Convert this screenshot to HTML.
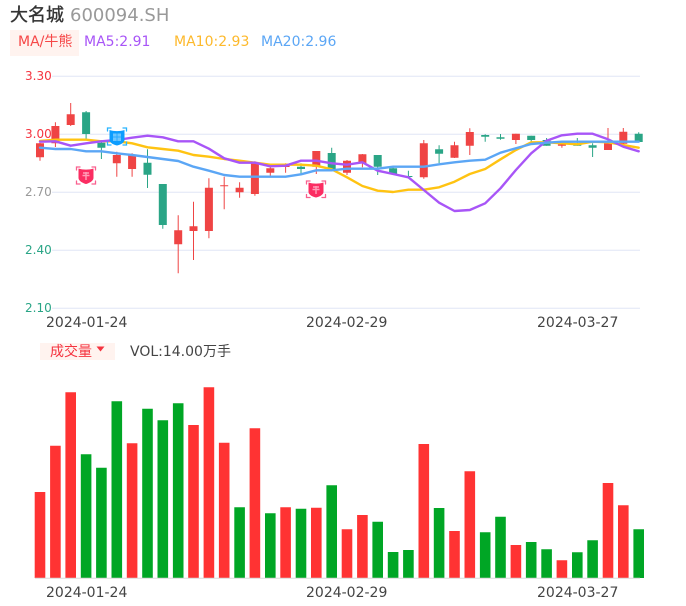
<!DOCTYPE html>
<html lang="zh">
<head>
<meta charset="utf-8">
<style>
html,body{margin:0;padding:0;background:#fff}
#p{position:relative;width:686px;height:606px;overflow:hidden;background:#fff;font-family:"DejaVu Sans","Noto Sans CJK SC",sans-serif}
#p svg{position:absolute;left:0;top:0}
.t{position:absolute;white-space:nowrap;line-height:1}
</style>
</head>
<body>
<div id="p">
<svg width="686" height="606" viewBox="0 0 686 606" fill="none">
<rect x="10" y="30" width="69" height="26" fill="#fff3ef"/>
<rect x="40" y="343" width="75" height="17" fill="#fff3ef"/>
<path d="M96.500 346.500H104.500L100.500 351.500Z" fill="#f5333f"/>
<path d="M52 76.300H640M52 134.300H640M52 192.300H640M52 250.300H640M52 308.300H640" stroke="#e0e6f5" stroke-width="1"/>
<path stroke="#ef4444" stroke-width="1" d="M40 143V160.700M55.400 122.300V147M70.700 103V126M116.800 151.700V176.700M132.100 153.300V176.700M178.200 215.300V273.300M193.500 201.700V260M208.900 178.300V238.300M224.200 176.700V209.300M239.600 182.300V197.700M254.900 161.300V195.700M270.300 166.700V175.700M285.600 163.300V172.700M316.300 151V174M347 160V175M362.400 154V167.300M423.800 140V178.700M454.500 141.700V158M469.800 128.300V155M515.900 133.700V144M561.900 144V147.700M608 128V150M623.300 128V144"/>
<path stroke="#ef4444" stroke-width="8" d="M40 143.300V157.300M55.400 126V143.300M70.700 114.300V125M116.800 155V163.300M132.100 155.300V169M178.200 230.300V244.300M193.500 226.300V231M208.900 187.700V231M224.200 185.300V186.300M239.600 187.700V192.300M254.900 163.300V194M270.300 168.300V172.700M285.600 165.700V167M316.300 151V166.700M347 160.700V172.700M362.400 154.300V163.300M423.800 143.300V177.300M454.500 145.300V157.700M469.800 132V145.700M515.900 133.700V140M561.900 144.300V145.700M608 143.300V150M623.300 131.700V143.700"/>
<path stroke="#2aa586" stroke-width="1" d="M86.100 111V139M101.400 140V159M147.500 149.300V188M162.800 184V228.700M301 163.300V174M331.700 147.700V171M377.700 155V175M393.100 166.700V175M408.400 170.700V177M439.100 145.300V163M485.200 134.300V141.700M500.500 134V139.700M531.200 135.700V144M546.600 138V145.700M577.300 138V145.700M592.600 143.300V157M638.700 132.300V142"/>
<path stroke="#2aa586" stroke-width="8" d="M86.100 112.300V134M101.400 142.700V147.700M147.500 162.700V174.700M162.800 184V225M301 166.700V169M331.700 153V169M377.700 155V166.700M393.100 168.300V174M408.400 176V177M439.100 149.300V153.700M485.200 135V136.700M500.500 137.300V138.700M531.200 135.700V140M546.600 140V145.700M577.300 144.300V145.700M592.600 145.300V147.700M638.700 133.700V142"/>
<polyline stroke="#ffc312" stroke-width="2.400" stroke-linejoin="round" stroke-linecap="round" points="40,141 55.400,139.700 70.700,139.700 86.100,139.700 101.400,141.300 116.800,141.300 132.100,143.300 147.500,147.300 162.800,149 178.200,150.700 193.500,155 208.900,156.700 224.200,159 239.600,160.700 254.900,162.700 270.300,164.700 285.600,164.700 301,164.700 316.300,165.700 331.700,169.300 347,177.300 362.400,186 377.700,190.700 393.100,192 408.400,189.700 423.800,189.700 439.100,187.300 454.500,181.700 469.800,174 485.200,169 500.500,159.300 515.900,150 531.200,142.300 546.600,142.300 561.900,143.300 577.300,144.300 592.600,141.700 608,142.300 623.300,145 638.700,147.700"/>
<polyline stroke="#a855f7" stroke-width="2.400" stroke-linejoin="round" stroke-linecap="round" points="40,141.700 55.400,141.300 70.700,145.700 86.100,143.300 101.400,141.300 116.800,140 132.100,137.700 147.500,135.700 162.800,137.300 178.200,141.300 193.500,141.300 208.900,148.700 224.200,158.300 239.600,162.700 254.900,162.700 270.300,166.300 285.600,165.700 301,160.700 316.300,160.700 331.700,163.300 347,164.700 362.400,162.300 377.700,170.700 393.100,174 408.400,177.300 423.800,190 439.100,202.700 454.500,211 469.800,210 485.200,203.300 500.500,188.300 515.900,170 531.200,153.300 546.600,140.700 561.900,135.300 577.300,133.700 592.600,133.700 608,139.300 623.300,146.700 638.700,151.300"/>
<polyline stroke="#5ba6f5" stroke-width="2.400" stroke-linejoin="round" stroke-linecap="round" points="40,147.700 55.400,149 70.700,149 86.100,151.300 101.400,151.300 116.800,153.300 132.100,155 147.500,157 162.800,159 178.200,161 193.500,166.700 208.900,170.700 224.200,175 239.600,176.700 254.900,176.700 270.300,176.700 285.600,176.700 301,174.300 316.300,170.300 331.700,170.300 347,168.700 362.400,168.700 377.700,168.700 393.100,166.700 408.400,166.700 423.800,166.700 439.100,164.300 454.500,162.300 469.800,160.700 485.200,159.700 500.500,152.700 515.900,148.300 531.200,144 546.600,142.700 561.900,141.700 577.300,141.700 592.600,141.700 608,141.700 623.300,141.700 638.700,141.700"/>
<g stroke-linecap="round" stroke-width="1.300">
<g stroke="#f9608f">
<path d="M76.500 170V167H80M92 167H95.500V170M76.500 181V184H80M92 184H95.500V181"/>
<path d="M306.500 184V181H310M322 181H325.500V184M306.500 194.500V197.500H310M322 197.500H325.500V194.500"/>
</g>
<path stroke="#28b4ff" d="M107.500 131V128H111M123 128H126.500V131M107.500 142V145H111M123 145H126.500V142"/>
</g>
<path d="M78.500 168.500C83 170 89 170 93.500 168.500V178C93.500 181 88.500 183.500 86 184C83.500 183.500 78.500 181 78.500 178Z" fill="#fb2d62"/>
<path d="M308.500 182.500C313 184 319 184 323.500 182.500V192C323.500 195 318.500 197 316 197.500C313.500 197 308.500 195 308.500 192Z" fill="#fb2d62"/>
<path d="M109.500 130C114 131.500 120 131.500 124.500 130V140C124.500 143 119.500 145 117 145.500C114.500 145 109.500 143 109.500 140Z" fill="#0c9dff"/>
<path d="M82.500 175.500H89.500M86 172V180M83 173H89" stroke="#ff9db8" stroke-width="1.400"/>
<path d="M312.500 189.500H319.500M316 186V194M313 187H319" stroke="#ff9db8" stroke-width="1.400"/>
<rect x="113" y="133.500" width="8" height="7.500" fill="#6cc6ff"/>
<path d="M117 133.500V141M113 137H121" stroke="#2aa9ff" stroke-width="1"/>
<path stroke="#ff3333" stroke-width="10.600" d="M40 492V578M55.400 445.700V578M70.700 392.300V578M132.100 443.300V578M193.500 425V578M208.900 387.300V578M224.200 442.700V578M254.900 428.300V578M285.600 507.300V578M316.300 507.700V578M347 529.300V578M362.400 515V578M423.800 444V578M454.500 531V578M469.800 471.300V578M515.900 545V578M561.900 560.300V578M608 483V578M623.300 505.300V578"/>
<path stroke="#00a625" stroke-width="10.600" d="M86.100 454.300V578M101.400 467.700V578M116.800 401.300V578M147.500 408.700V578M162.800 420.300V578M178.200 403.300V578M239.600 507.300V578M270.300 513.300V578M301 508.700V578M331.700 485.300V578M377.700 521.700V578M393.100 552V578M408.400 550V578M439.100 508V578M485.200 532.300V578M500.500 516.700V578M531.200 542V578M546.600 549.300V578M577.300 552.300V578M592.600 540.300V578M638.700 529.300V578"/>
<path d="M35 578.300H640" stroke="#dcdcdc" stroke-width="1"/>
</svg>
<div class="t" style="left:10px;top:7px;font-size:18px;color:#333;-webkit-text-stroke:.35px #333">大名城</div>
<div class="t" style="left:70px;top:7px;font-size:18px;color:#999">600094.SH</div>
<div class="t" style="left:18px;top:35px;font-size:14px;color:#f64747">MA/牛熊</div>
<div class="t" style="left:84px;top:35px;font-size:14px;color:#a855f7">MA5:2.91</div>
<div class="t" style="left:174px;top:35px;font-size:14px;color:#fdb92c">MA10:2.93</div>
<div class="t" style="left:261px;top:35px;font-size:14px;color:#5ba6f5">MA20:2.96</div>
<div class="t" style="left:25px;top:70px;font-size:12px;color:#f5333f">3.30</div>
<div class="t" style="left:25px;top:128px;font-size:12px;color:#f5333f">3.00</div>
<div class="t" style="left:25px;top:186px;font-size:12px;color:#999">2.70</div>
<div class="t" style="left:25px;top:244px;font-size:12px;color:#2aa586">2.40</div>
<div class="t" style="left:25px;top:302px;font-size:12px;color:#2aa586">2.10</div>
<div class="t" style="left:46px;top:316px;font-size:14px;color:#444">2024-01-24</div>
<div class="t" style="left:306px;top:316px;font-size:14px;color:#444">2024-02-29</div>
<div class="t" style="left:537px;top:316px;font-size:14px;color:#444">2024-03-27</div>
<div class="t" style="left:50px;top:345px;font-size:14px;color:#f5333f">成交量</div>
<div class="t" style="left:130px;top:345px;font-size:14px;color:#444">VOL:14.00万手</div>
<div class="t" style="left:46px;top:586px;font-size:14px;color:#444">2024-01-24</div>
<div class="t" style="left:306px;top:586px;font-size:14px;color:#444">2024-02-29</div>
<div class="t" style="left:537px;top:586px;font-size:14px;color:#444">2024-03-27</div>
</div>
</body>
</html>
